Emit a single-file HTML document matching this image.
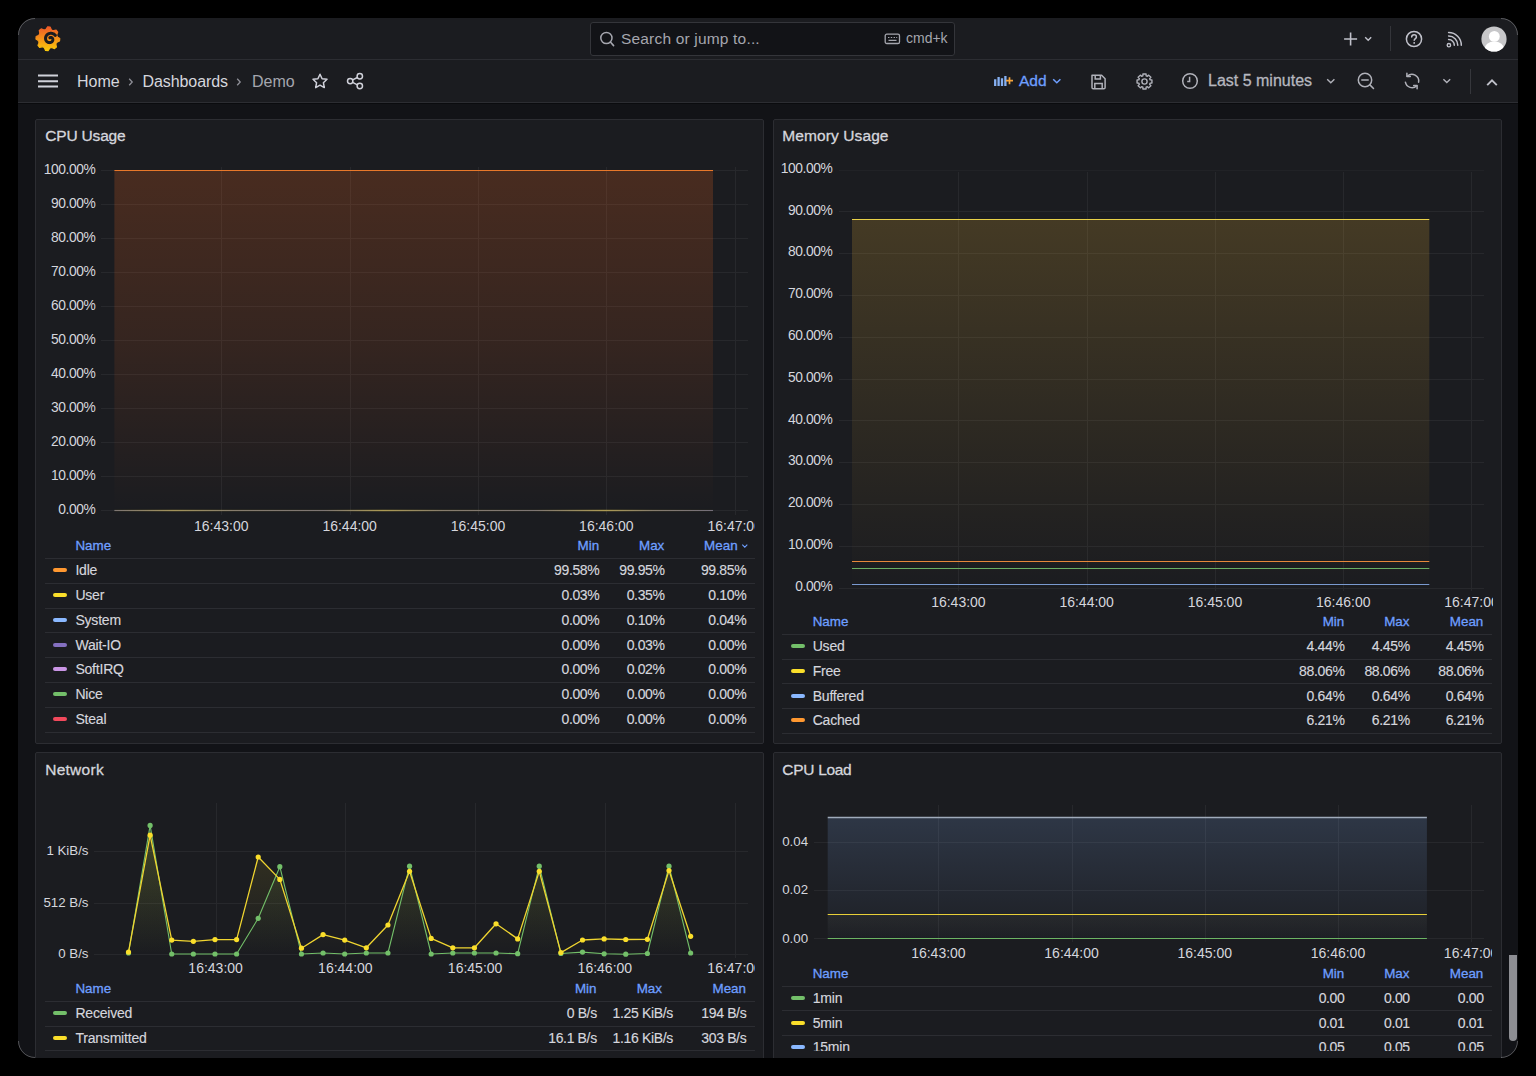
<!DOCTYPE html><html><head><meta charset="utf-8"><style>
*{box-sizing:border-box;margin:0;padding:0}
html,body{width:1536px;height:1076px;overflow:hidden;background:#000}
body{font-family:"Liberation Sans",sans-serif;color:#d5d6dd;position:relative}
#win{position:absolute;left:18px;top:18px;width:1500px;height:1040px;border-radius:17px;overflow:hidden;background:#121317}
#in{position:absolute;left:-18px;top:-18px;width:1536px;height:1076px}
.a{position:absolute;white-space:nowrap}
.hdr{position:absolute;left:0;width:1536px;background:#1b1c20}
.panel{position:absolute;background:#1b1c20;border:1px solid #2c2d32;border-radius:2px}
.med{-webkit-text-stroke:0.3px currentColor}
.thk{-webkit-text-stroke:0.15px currentColor}
.sep{position:absolute;height:1px;background:#2c2d32}
.mk{position:absolute;width:14px;height:4px;border-radius:2px}
svg{position:absolute;overflow:visible}
</style></head><body><div id="win"><div id="in"><div class="hdr" style="top:18px;height:41px"></div><div class="hdr" style="top:59px;height:1px;background:#2c2d32"></div><div class="hdr" style="top:60px;height:42px"></div><div class="hdr" style="top:102px;height:1px;background:#2c2d32"></div><div class="hdr" style="top:103px;height:1px;background:#0a0b0e"></div><svg style="left:35px;top:26px" width="26" height="26" viewBox="0 0 26 26">
<defs><linearGradient id="lg" x1="0" y1="0" x2="0" y2="1"><stop offset="0" stop-color="#f05a28"/><stop offset="1" stop-color="#fbca0a"/></linearGradient></defs>
<polygon fill="url(#lg)" stroke="url(#lg)" stroke-width="1.2" stroke-linejoin="round" points="11.29,2.87 12.64,0.85 15.12,1.07 16.11,3.29 17.14,4.50 18.73,4.66 21.12,4.19 22.72,6.10 21.84,8.37 21.72,9.95 22.73,11.19 24.75,12.54 24.53,15.02 22.31,16.01 21.10,17.04 20.94,18.63 21.41,21.02 19.50,22.62 17.23,21.74 15.65,21.62 14.41,22.63 13.06,24.65 10.58,24.43 9.59,22.21 8.56,21.00 6.97,20.84 4.58,21.31 2.98,19.40 3.86,17.13 3.98,15.55 2.97,14.31 0.95,12.96 1.17,10.48 3.39,9.49 4.60,8.46 4.76,6.87 4.29,4.48 6.20,2.88 8.47,3.76 10.05,3.88"/>
<polyline fill="none" stroke="#1b1c20" stroke-width="3.0" stroke-linecap="round" points="20.36,9.39 20.09,9.10 19.81,8.83 19.51,8.58 19.20,8.35 18.87,8.14 18.54,7.95 18.20,7.79 17.85,7.65 17.49,7.54 17.13,7.44 16.77,7.37 16.41,7.33 16.04,7.30 15.68,7.30 15.32,7.33 14.97,7.37 14.62,7.44 14.28,7.53 13.95,7.63 13.63,7.76 13.32,7.91 13.02,8.08 12.74,8.26 12.47,8.46 12.22,8.67 11.98,8.90 11.75,9.14 11.55,9.39 11.36,9.65 11.19,9.93 11.04,10.21 10.91,10.49 10.80,10.78 10.71,11.08 10.64,11.38 10.59,11.68 10.55,11.98 10.54,12.28 10.54,12.57 10.57,12.87 10.61,13.15 10.67,13.44 10.75,13.71 10.84,13.98 10.95,14.24 11.08,14.49 11.22,14.73 11.37,14.95 11.53,15.17 11.71,15.37 11.90,15.56 12.10,15.73 12.30,15.89 12.52,16.03 12.74,16.16 12.96,16.28 13.19,16.37 13.43,16.45 13.66,16.52 13.90,16.57 14.14,16.61 14.37,16.62 14.61,16.63 14.84,16.62 15.07,16.59 15.29,16.55 15.51,16.49 15.72,16.43 15.93,16.35 16.12,16.25 16.31,16.15 16.49,16.04 16.66,15.91 16.82,15.78 16.96,15.64 17.10,15.49 17.22,15.34 17.34,15.18 17.44,15.01 17.53,14.84 17.60,14.67 17.67,14.49 17.72,14.32 17.76,14.14 17.79,13.96 17.80,13.79 17.80,13.61 17.80,13.44 17.78,13.27 17.75,13.11 17.71,12.95 17.66,12.80 17.60,12.65 17.53,12.51 17.46,12.38 17.37,12.25 17.29,12.13 17.19,12.02 17.09,11.92 16.98,11.83 16.87,11.74 16.76,11.67 16.64,11.60 16.52,11.55 16.40,11.50 16.28,11.46 16.16,11.43 16.05,11.41 15.93,11.40 15.81,11.40 15.70,11.40 15.59,11.41 15.48,11.43 15.38,11.46 15.28,11.49 15.18,11.53 15.09,11.58 15.01,11.63 14.93,11.68 14.86,11.74"/>
</svg><div class="a" style="left:590px;top:22px;width:365px;height:34px;border:1px solid #34353a;border-radius:3px;background:#121317"></div><svg style="left:598px;top:30px" width="18" height="18" viewBox="0 0 18 18"><circle cx="8.4" cy="8" r="5.6" fill="none" stroke="#a5a6ae" stroke-width="1.5"/><path d="M12.4 12 L15.6 15.6" stroke="#a5a6ae" stroke-width="1.6" stroke-linecap="round"/></svg><div class="a " style="top:30.88px;font-size:15.5px;line-height:15.5px;color:#a5a6ae;left:621.00px;letter-spacing:0.18px;">Search or jump to...</div><svg style="left:884px;top:33px" width="17" height="12" viewBox="0 0 17 12"><rect x="1.2" y="1.2" width="14.3" height="9.3" rx="1.6" fill="none" stroke="#a5a6ae" stroke-width="1.3"/><path d="M4 4.5h1.4M6.8 4.5h1.4M9.6 4.5h1.4M12.2 4.5h1M4.5 7.4h8" stroke="#a5a6ae" stroke-width="1.2"/></svg><div class="a " style="top:31.05px;font-size:14px;line-height:14px;color:#a5a6ae;left:906.00px;">cmd+k</div><svg style="left:1340px;top:28px" width="40" height="22" viewBox="0 0 40 22"><path d="M10.6 4.5v13M4.1 11h13" stroke="#c0c1ca" stroke-width="1.6"/><path d="M25.2 9.2l3 3 3-3" fill="none" stroke="#c0c1ca" stroke-width="1.4"/></svg><div class="a" style="left:1390px;top:26px;width:1px;height:25px;background:#34353a"></div><svg style="left:1404px;top:29px" width="20" height="20" viewBox="0 0 20 20"><circle cx="10" cy="10" r="7.6" fill="none" stroke="#c0c1ca" stroke-width="1.5"/><path d="M7.7 8.1c0-1.4 1-2.3 2.4-2.3 1.3 0 2.3.9 2.3 2.1 0 1.6-2.2 1.7-2.2 3.4" fill="none" stroke="#c0c1ca" stroke-width="1.5" stroke-linecap="round"/><circle cx="10.2" cy="13.9" r="0.95" fill="#c0c1ca"/></svg><svg style="left:1445px;top:29px" width="20" height="20" viewBox="0 0 20 20"><circle cx="3.9" cy="16.2" r="1.7" fill="none" stroke="#c0c1ca" stroke-width="1.4"/><path d="M3.6 10.6a5.6 5.6 0 0 1 5.7 5.7M3.6 7.1a9.1 9.1 0 0 1 9.2 9.2M3.6 3.6a12.6 12.6 0 0 1 12.7 12.7" fill="none" stroke="#c0c1ca" stroke-width="1.5" stroke-linecap="round"/></svg><svg style="left:1481px;top:26px" width="26" height="26" viewBox="0 0 26 26"><defs><clipPath id="av"><circle cx="13" cy="13" r="12.6"/></clipPath></defs><circle cx="13" cy="13" r="12.6" fill="#c7c7c9"/><g clip-path="url(#av)" fill="#ffffff"><circle cx="13.3" cy="10.4" r="5.4"/><ellipse cx="13.3" cy="23.6" rx="10" ry="8.2"/></g></svg><svg style="left:37px;top:73px" width="22" height="16" viewBox="0 0 22 16"><path d="M1 2.6h20M1 8.2h20M1 13.6h20" stroke="#d0d1da" stroke-width="2"/></svg><div class="a " style="top:73.66px;font-size:16px;line-height:16px;color:#d5d6dd;left:77.00px;">Home</div><svg style="left:126px;top:76px" width="10" height="12" viewBox="0 0 10 12"><path d="M3.2 2.8l3 3.2-3 3.2" fill="none" stroke="#8e8f97" stroke-width="1.3"/></svg><div class="a " style="top:73.66px;font-size:16px;line-height:16px;color:#d5d6dd;left:142.50px;letter-spacing:-0.08px;">Dashboards</div><svg style="left:234px;top:76px" width="10" height="12" viewBox="0 0 10 12"><path d="M3.2 2.8l3 3.2-3 3.2" fill="none" stroke="#8e8f97" stroke-width="1.3"/></svg><div class="a " style="top:73.66px;font-size:16px;line-height:16px;color:#a5a6ae;left:252.00px;">Demo</div><svg style="left:310px;top:71px" width="20" height="20" viewBox="0 0 20 20"><path d="M10 3.2l2.1 4.5 4.9.6-3.6 3.4.9 4.9L10 14.2l-4.3 2.4.9-4.9L3 8.3l4.9-.6z" fill="none" stroke="#d0d1da" stroke-width="1.5" stroke-linejoin="round"/></svg><svg style="left:345px;top:71px" width="20" height="20" viewBox="0 0 20 20"><circle cx="14.8" cy="5.3" r="2.7" fill="none" stroke="#d0d1da" stroke-width="1.5"/><circle cx="5.2" cy="10.1" r="2.7" fill="none" stroke="#d0d1da" stroke-width="1.5"/><circle cx="14.8" cy="15" r="2.7" fill="none" stroke="#d0d1da" stroke-width="1.5"/><path d="M7.6 8.9l4.8-2.4M7.6 11.3l4.8 2.5" stroke="#d0d1da" stroke-width="1.5"/></svg><svg style="left:992px;top:73px" width="24" height="16" viewBox="0 0 24 16"><path d="M3.2 6.3V13M6.6 4V13M10 5.2V13M13.4 3V13" stroke="#86b0f2" stroke-width="2.3"/><path d="M17.5 4.2v7M14 7.7h7" stroke="#f3a33c" stroke-width="1.7"/></svg><div class="a " style="top:73.38px;font-size:15.5px;line-height:15.5px;color:#6e9fff;left:1019.00px;-webkit-text-stroke:0.3px #6e9fff;">Add</div><svg style="left:1051px;top:76px" width="12" height="10" viewBox="0 0 12 10"><path d="M2.2 3.2l3.6 3.6 3.6-3.6" fill="none" stroke="#6e9fff" stroke-width="1.5"/></svg><svg style="left:1089px;top:72px" width="19" height="19" viewBox="0 0 19 19"><path d="M3 3.2h9.6l3.5 3.5v8.8a1.3 1.3 0 0 1-1.3 1.3H4.3A1.3 1.3 0 0 1 3 15.5z" fill="none" stroke="#b0b1b9" stroke-width="1.5" stroke-linejoin="round"/><path d="M6.2 3.4v3.6h5.2V3.4M5.8 16.6v-5.2h7.4v5.2" fill="none" stroke="#b0b1b9" stroke-width="1.5"/></svg><svg style="left:1135px;top:71.5px" width="19" height="19" viewBox="0 0 19 19"><polygon points="7.92,2.07 11.08,2.07 11.13,3.83 12.36,4.34 13.64,3.13 15.87,5.36 14.66,6.64 15.17,7.87 16.93,7.92 16.93,11.08 15.17,11.13 14.66,12.36 15.87,13.64 13.64,15.87 12.36,14.66 11.13,15.17 11.08,16.93 7.92,16.93 7.87,15.17 6.64,14.66 5.36,15.87 3.13,13.64 4.34,12.36 3.83,11.13 2.07,11.08 2.07,7.92 3.83,7.87 4.34,6.64 3.13,5.36 5.36,3.13 6.64,4.34 7.87,3.83" fill="none" stroke="#b0b1b9" stroke-width="1.4" stroke-linejoin="round"/><circle cx="9.5" cy="9.5" r="2.6" fill="none" stroke="#b0b1b9" stroke-width="1.4"/></svg><svg style="left:1181px;top:72px" width="18" height="18" viewBox="0 0 18 18"><circle cx="9" cy="9" r="7.3" fill="none" stroke="#b0b1b9" stroke-width="1.5"/><path d="M8.6 4.8v4.6h-2.4" fill="none" stroke="#b0b1b9" stroke-width="1.5"/></svg><div class="a " style="top:73.46px;font-size:16px;line-height:16px;color:#b6b7bf;left:1208.00px;-webkit-text-stroke:0.3px #b6b7bf;">Last 5 minutes</div><svg style="left:1325px;top:76px" width="12" height="10" viewBox="0 0 12 10"><path d="M2.2 3.2l3.6 3.6 3.6-3.6" fill="none" stroke="#b0b1b9" stroke-width="1.4"/></svg><svg style="left:1356px;top:71px" width="20" height="20" viewBox="0 0 20 20"><circle cx="9" cy="9" r="6.7" fill="none" stroke="#b0b1b9" stroke-width="1.5"/><path d="M5.8 9h6.4M13.9 13.9l3.6 3.6" stroke="#b0b1b9" stroke-width="1.5" stroke-linecap="round"/></svg><svg style="left:1402px;top:71px" width="20" height="20" viewBox="0 0 20 20"><path d="M5.3 5.3A6.7 6.7 0 0 1 16.6 11.2M3.4 11.2A6.7 6.7 0 0 0 14.7 14.7" fill="none" stroke="#b0b1b9" stroke-width="1.5" stroke-linecap="round"/><path d="M4.9 2.2v3.4h3.4M15.1 17.8v-3.4h-3.4" fill="none" stroke="#b0b1b9" stroke-width="1.5" stroke-linecap="round" stroke-linejoin="round"/></svg><svg style="left:1441px;top:76px" width="12" height="10" viewBox="0 0 12 10"><path d="M2.4 3.2l3.4 3.4 3.4-3.4" fill="none" stroke="#b0b1b9" stroke-width="1.4"/></svg><div class="a" style="left:1469.5px;top:69px;width:1.5px;height:25px;background:#36373c"></div><svg style="left:1485px;top:75px" width="14" height="14" viewBox="0 0 14 14"><path d="M2.2 10.2L7 5.4l4.8 4.8" fill="none" stroke="#c0c1ca" stroke-width="1.9"/></svg><div class="panel" style="left:35px;top:119px;width:729px;height:625px"></div><div class="panel" style="left:773px;top:119px;width:729px;height:625px"></div><div class="panel" style="left:35px;top:752px;width:729px;height:400px"></div><div class="panel" style="left:773px;top:752px;width:729px;height:400px"></div><div class="a med" style="top:127.98px;font-size:15.5px;line-height:15.5px;color:#d5d6dd;left:45.20px;letter-spacing:-0.17px;">CPU Usage</div><div class="a med" style="top:127.98px;font-size:15.5px;line-height:15.5px;color:#d5d6dd;left:782.30px;letter-spacing:0.1px;">Memory Usage</div><div class="a med" style="top:762.48px;font-size:15.5px;line-height:15.5px;color:#d5d6dd;left:45.20px;letter-spacing:0.27px;">Network</div><div class="a med" style="top:762.48px;font-size:15.5px;line-height:15.5px;color:#d5d6dd;left:782.30px;letter-spacing:-0.3px;">CPU Load</div><div class="a " style="top:503.32px;font-size:13.8px;line-height:13.8px;color:#d5d6dd;right:1440.60px;text-align:right;letter-spacing:-0.4px;">0.00%</div><div class="a " style="top:469.29px;font-size:13.8px;line-height:13.8px;color:#d5d6dd;right:1440.60px;text-align:right;letter-spacing:-0.4px;">10.00%</div><div class="a " style="top:435.26px;font-size:13.8px;line-height:13.8px;color:#d5d6dd;right:1440.60px;text-align:right;letter-spacing:-0.4px;">20.00%</div><div class="a " style="top:401.23px;font-size:13.8px;line-height:13.8px;color:#d5d6dd;right:1440.60px;text-align:right;letter-spacing:-0.4px;">30.00%</div><div class="a " style="top:367.20px;font-size:13.8px;line-height:13.8px;color:#d5d6dd;right:1440.60px;text-align:right;letter-spacing:-0.4px;">40.00%</div><div class="a " style="top:333.17px;font-size:13.8px;line-height:13.8px;color:#d5d6dd;right:1440.60px;text-align:right;letter-spacing:-0.4px;">50.00%</div><div class="a " style="top:299.14px;font-size:13.8px;line-height:13.8px;color:#d5d6dd;right:1440.60px;text-align:right;letter-spacing:-0.4px;">60.00%</div><div class="a " style="top:265.11px;font-size:13.8px;line-height:13.8px;color:#d5d6dd;right:1440.60px;text-align:right;letter-spacing:-0.4px;">70.00%</div><div class="a " style="top:231.08px;font-size:13.8px;line-height:13.8px;color:#d5d6dd;right:1440.60px;text-align:right;letter-spacing:-0.4px;">80.00%</div><div class="a " style="top:197.05px;font-size:13.8px;line-height:13.8px;color:#d5d6dd;right:1440.60px;text-align:right;letter-spacing:-0.4px;">90.00%</div><div class="a " style="top:163.02px;font-size:13.8px;line-height:13.8px;color:#d5d6dd;right:1440.60px;text-align:right;letter-spacing:-0.4px;">100.00%</div><div style="position:absolute;left:0;top:0;width:755px;height:1076px;overflow:hidden"><div class="a " style="top:519.15px;font-size:14px;line-height:14px;color:#d5d6dd;left:71.30px;width:300px;text-align:center;">16:43:00</div><div class="a " style="top:519.15px;font-size:14px;line-height:14px;color:#d5d6dd;left:199.65px;width:300px;text-align:center;">16:44:00</div><div class="a " style="top:519.15px;font-size:14px;line-height:14px;color:#d5d6dd;left:328.00px;width:300px;text-align:center;">16:45:00</div><div class="a " style="top:519.15px;font-size:14px;line-height:14px;color:#d5d6dd;left:456.35px;width:300px;text-align:center;">16:46:00</div><div class="a " style="top:519.15px;font-size:14px;line-height:14px;color:#d5d6dd;left:584.70px;width:300px;text-align:center;">16:47:00</div></div><div class="a " style="top:579.72px;font-size:13.8px;line-height:13.8px;color:#d5d6dd;right:703.60px;text-align:right;letter-spacing:-0.4px;">0.00%</div><div class="a " style="top:537.92px;font-size:13.8px;line-height:13.8px;color:#d5d6dd;right:703.60px;text-align:right;letter-spacing:-0.4px;">10.00%</div><div class="a " style="top:496.12px;font-size:13.8px;line-height:13.8px;color:#d5d6dd;right:703.60px;text-align:right;letter-spacing:-0.4px;">20.00%</div><div class="a " style="top:454.32px;font-size:13.8px;line-height:13.8px;color:#d5d6dd;right:703.60px;text-align:right;letter-spacing:-0.4px;">30.00%</div><div class="a " style="top:412.52px;font-size:13.8px;line-height:13.8px;color:#d5d6dd;right:703.60px;text-align:right;letter-spacing:-0.4px;">40.00%</div><div class="a " style="top:370.72px;font-size:13.8px;line-height:13.8px;color:#d5d6dd;right:703.60px;text-align:right;letter-spacing:-0.4px;">50.00%</div><div class="a " style="top:328.92px;font-size:13.8px;line-height:13.8px;color:#d5d6dd;right:703.60px;text-align:right;letter-spacing:-0.4px;">60.00%</div><div class="a " style="top:287.12px;font-size:13.8px;line-height:13.8px;color:#d5d6dd;right:703.60px;text-align:right;letter-spacing:-0.4px;">70.00%</div><div class="a " style="top:245.32px;font-size:13.8px;line-height:13.8px;color:#d5d6dd;right:703.60px;text-align:right;letter-spacing:-0.4px;">80.00%</div><div class="a " style="top:203.52px;font-size:13.8px;line-height:13.8px;color:#d5d6dd;right:703.60px;text-align:right;letter-spacing:-0.4px;">90.00%</div><div class="a " style="top:161.72px;font-size:13.8px;line-height:13.8px;color:#d5d6dd;right:703.60px;text-align:right;letter-spacing:-0.4px;">100.00%</div><div style="position:absolute;left:0;top:0;width:1492.6px;height:1076px;overflow:hidden"><div class="a " style="top:594.95px;font-size:14px;line-height:14px;color:#d5d6dd;left:808.40px;width:300px;text-align:center;">16:43:00</div><div class="a " style="top:594.95px;font-size:14px;line-height:14px;color:#d5d6dd;left:936.67px;width:300px;text-align:center;">16:44:00</div><div class="a " style="top:594.95px;font-size:14px;line-height:14px;color:#d5d6dd;left:1064.94px;width:300px;text-align:center;">16:45:00</div><div class="a " style="top:594.95px;font-size:14px;line-height:14px;color:#d5d6dd;left:1193.21px;width:300px;text-align:center;">16:46:00</div><div class="a " style="top:594.95px;font-size:14px;line-height:14px;color:#d5d6dd;left:1321.48px;width:300px;text-align:center;">16:47:00</div></div><div class="a " style="top:947.24px;font-size:13.3px;line-height:13.3px;color:#d5d6dd;right:1447.50px;text-align:right;">0 B/s</div><div class="a " style="top:895.74px;font-size:13.3px;line-height:13.3px;color:#d5d6dd;right:1447.50px;text-align:right;">512 B/s</div><div class="a " style="top:844.24px;font-size:13.3px;line-height:13.3px;color:#d5d6dd;right:1447.50px;text-align:right;">1 KiB/s</div><div style="position:absolute;left:0;top:0;width:755px;height:1076px;overflow:hidden"><div class="a " style="top:961.45px;font-size:14px;line-height:14px;color:#d5d6dd;left:65.60px;width:300px;text-align:center;">16:43:00</div><div class="a " style="top:961.45px;font-size:14px;line-height:14px;color:#d5d6dd;left:195.35px;width:300px;text-align:center;">16:44:00</div><div class="a " style="top:961.45px;font-size:14px;line-height:14px;color:#d5d6dd;left:325.10px;width:300px;text-align:center;">16:45:00</div><div class="a " style="top:961.45px;font-size:14px;line-height:14px;color:#d5d6dd;left:454.85px;width:300px;text-align:center;">16:46:00</div><div class="a " style="top:961.45px;font-size:14px;line-height:14px;color:#d5d6dd;left:584.60px;width:300px;text-align:center;">16:47:00</div></div><div class="a " style="top:931.54px;font-size:13.3px;line-height:13.3px;color:#d5d6dd;left:782.20px;">0.00</div><div class="a " style="top:883.39px;font-size:13.3px;line-height:13.3px;color:#d5d6dd;left:782.20px;">0.02</div><div class="a " style="top:835.24px;font-size:13.3px;line-height:13.3px;color:#d5d6dd;left:782.20px;">0.04</div><div style="position:absolute;left:0;top:0;width:1492px;height:1076px;overflow:hidden"><div class="a " style="top:945.65px;font-size:14px;line-height:14px;color:#d5d6dd;left:788.40px;width:300px;text-align:center;">16:43:00</div><div class="a " style="top:945.65px;font-size:14px;line-height:14px;color:#d5d6dd;left:921.58px;width:300px;text-align:center;">16:44:00</div><div class="a " style="top:945.65px;font-size:14px;line-height:14px;color:#d5d6dd;left:1054.76px;width:300px;text-align:center;">16:45:00</div><div class="a " style="top:945.65px;font-size:14px;line-height:14px;color:#d5d6dd;left:1187.94px;width:300px;text-align:center;">16:46:00</div><div class="a " style="top:945.65px;font-size:14px;line-height:14px;color:#d5d6dd;left:1321.12px;width:300px;text-align:center;">16:47:00</div></div><svg style="left:0;top:0" width="1536" height="1076" viewBox="0 0 1536 1076"><path d="M101 510.5H748" stroke="#27282c" stroke-width="1"/><path d="M101 476.5H748" stroke="#27282c" stroke-width="1"/><path d="M101 442.5H748" stroke="#27282c" stroke-width="1"/><path d="M101 408.5H748" stroke="#27282c" stroke-width="1"/><path d="M101 374.5H748" stroke="#27282c" stroke-width="1"/><path d="M101 340.5H748" stroke="#27282c" stroke-width="1"/><path d="M101 306.5H748" stroke="#27282c" stroke-width="1"/><path d="M101 272.5H748" stroke="#27282c" stroke-width="1"/><path d="M101 238.5H748" stroke="#27282c" stroke-width="1"/><path d="M101 204.5H748" stroke="#27282c" stroke-width="1"/><path d="M101 170.5H748" stroke="#27282c" stroke-width="1"/><path d="M221.5 167V515" stroke="#27282c" stroke-width="1"/><path d="M350.5 167V515" stroke="#27282c" stroke-width="1"/><path d="M478.5 167V515" stroke="#27282c" stroke-width="1"/><path d="M606.5 167V515" stroke="#27282c" stroke-width="1"/><path d="M735.5 167V515" stroke="#27282c" stroke-width="1"/><linearGradient id="cpuf" gradientUnits="userSpaceOnUse" x1="0" y1="170.71044999999998" x2="0" y2="510.5"><stop offset="0" stop-color="#ff6a1e" stop-opacity="0.2"/><stop offset="0.5" stop-color="#ff6a1e" stop-opacity="0.115"/><stop offset="0.8" stop-color="#ff6a1e" stop-opacity="0.045"/><stop offset="1" stop-color="#ff6a1e" stop-opacity="0"/></linearGradient><rect x="114.4" y="170.71044999999998" width="598.6" height="339.78955" fill="url(#cpuf)"/><polyline points="114.40,170.50 713.00,170.50" fill="none" stroke="#e8782a" stroke-width="1.2" stroke-linejoin="round"/><polyline points="114.40,510.50 713.00,510.50" fill="none" stroke="#6a6680" stroke-width="1.2" stroke-linejoin="round"/><linearGradient id="zl" gradientUnits="userSpaceOnUse" x1="114.4" y1="0" x2="713" y2="0"><stop offset="0" stop-color="#c8b040" stop-opacity="0.2"/><stop offset="0.1" stop-color="#c8b040" stop-opacity="0.6"/><stop offset="0.2" stop-color="#c8b040" stop-opacity="0.3"/><stop offset="0.35" stop-color="#c8b040" stop-opacity="0.2"/><stop offset="0.45" stop-color="#c8b040" stop-opacity="0.7"/><stop offset="0.55" stop-color="#c8b040" stop-opacity="0.3"/><stop offset="0.7" stop-color="#c8b040" stop-opacity="0.2"/><stop offset="0.82" stop-color="#c8b040" stop-opacity="0.7"/><stop offset="0.9" stop-color="#c8b040" stop-opacity="0.3"/><stop offset="1" stop-color="#c8b040" stop-opacity="0.1"/></linearGradient><path d="M114.4 510.5H713" stroke="url(#zl)" stroke-width="1.3"/><path d="M839 588.5H1484" stroke="#27282c" stroke-width="1"/><path d="M839 546.5H1484" stroke="#27282c" stroke-width="1"/><path d="M839 504.5H1484" stroke="#27282c" stroke-width="1"/><path d="M839 462.5H1484" stroke="#27282c" stroke-width="1"/><path d="M839 420.5H1484" stroke="#27282c" stroke-width="1"/><path d="M839 379.5H1484" stroke="#27282c" stroke-width="1"/><path d="M839 337.5H1484" stroke="#27282c" stroke-width="1"/><path d="M839 295.5H1484" stroke="#27282c" stroke-width="1"/><path d="M839 253.5H1484" stroke="#27282c" stroke-width="1"/><path d="M839 211.5H1484" stroke="#27282c" stroke-width="1"/><path d="M839 170.5H1484" stroke="#212226" stroke-width="1"/><path d="M958.5 172V591" stroke="#27282c" stroke-width="1"/><path d="M1087.5 172V591" stroke="#27282c" stroke-width="1"/><path d="M1215.5 172V591" stroke="#27282c" stroke-width="1"/><path d="M1343.5 172V591" stroke="#27282c" stroke-width="1"/><path d="M1471.5 172V591" stroke="#27282c" stroke-width="1"/><linearGradient id="g1" gradientUnits="userSpaceOnUse" x1="0" y1="219.50920000000002" x2="0" y2="587.6"><stop offset="0" stop-color="#fabe37" stop-opacity="0.185"/><stop offset="1" stop-color="#fabe37" stop-opacity="0.0"/></linearGradient><polygon points="852.00,219.51 1429.30,219.51 1429.30,587.60 852.00,587.60" fill="url(#g1)"/><polyline points="852.00,219.50 1429.30,219.50" fill="none" stroke="#e8d048" stroke-width="1.1" stroke-linejoin="round"/><polyline points="852.00,561.50 1429.30,561.50" fill="none" stroke="#e8883a" stroke-width="1.0" stroke-linejoin="round"/><polyline points="852.00,568.50 1429.30,568.50" fill="none" stroke="#6aae62" stroke-width="1.0" stroke-linejoin="round"/><polyline points="852.00,584.50 1429.30,584.50" fill="none" stroke="#7a9ad0" stroke-width="1.0" stroke-linejoin="round"/><path d="M94 954.5H748" stroke="#27282c" stroke-width="1"/><path d="M94 903.5H748" stroke="#27282c" stroke-width="1"/><path d="M94 851.5H748" stroke="#27282c" stroke-width="1"/><path d="M216.5 803V958" stroke="#27282c" stroke-width="1"/><path d="M345.5 803V958" stroke="#27282c" stroke-width="1"/><path d="M475.5 803V958" stroke="#27282c" stroke-width="1"/><path d="M605.5 803V958" stroke="#27282c" stroke-width="1"/><path d="M735.5 803V958" stroke="#27282c" stroke-width="1"/><linearGradient id="g2" gradientUnits="userSpaceOnUse" x1="0" y1="825" x2="0" y2="954.2"><stop offset="0" stop-color="#73bf69" stop-opacity="0.12"/><stop offset="1" stop-color="#73bf69" stop-opacity="0.0"/></linearGradient><polygon points="128.50,954.20 128.50,953.00 150.12,825.40 171.74,954.00 193.36,954.00 214.98,954.00 236.60,954.00 258.22,918.30 279.84,866.70 301.46,954.00 323.08,953.00 344.70,954.00 366.32,953.00 387.94,953.00 409.56,866.20 431.18,954.00 452.80,953.00 474.42,953.00 496.04,953.00 517.66,953.70 539.28,866.20 560.90,953.50 582.52,952.10 604.14,953.80 625.76,954.20 647.38,953.50 669.00,866.20 690.62,953.00 690.62,954.20" fill="url(#g2)"/><linearGradient id="g3" gradientUnits="userSpaceOnUse" x1="0" y1="835" x2="0" y2="954.2"><stop offset="0" stop-color="#fade2a" stop-opacity="0.12"/><stop offset="1" stop-color="#fade2a" stop-opacity="0.0"/></linearGradient><polygon points="128.50,954.20 128.50,952.10 150.12,835.20 171.74,940.10 193.36,941.30 214.98,939.60 236.60,939.60 258.22,857.00 279.84,879.40 301.46,948.20 323.08,934.60 344.70,940.10 366.32,947.80 387.94,925.00 409.56,871.30 431.18,938.40 452.80,947.80 474.42,947.80 496.04,923.80 517.66,938.90 539.28,871.30 560.90,952.60 582.52,940.00 604.14,938.90 625.76,939.50 647.38,939.30 669.00,870.50 690.62,936.30 690.62,954.20" fill="url(#g3)"/><polyline points="128.50,953.00 150.12,825.40 171.74,954.00 193.36,954.00 214.98,954.00 236.60,954.00 258.22,918.30 279.84,866.70 301.46,954.00 323.08,953.00 344.70,954.00 366.32,953.00 387.94,953.00 409.56,866.20 431.18,954.00 452.80,953.00 474.42,953.00 496.04,953.00 517.66,953.70 539.28,866.20 560.90,953.50 582.52,952.10 604.14,953.80 625.76,954.20 647.38,953.50 669.00,866.20 690.62,953.00" fill="none" stroke="#73bf69" stroke-width="1.1" stroke-linejoin="round"/><polyline points="128.50,952.10 150.12,835.20 171.74,940.10 193.36,941.30 214.98,939.60 236.60,939.60 258.22,857.00 279.84,879.40 301.46,948.20 323.08,934.60 344.70,940.10 366.32,947.80 387.94,925.00 409.56,871.30 431.18,938.40 452.80,947.80 474.42,947.80 496.04,923.80 517.66,938.90 539.28,871.30 560.90,952.60 582.52,940.00 604.14,938.90 625.76,939.50 647.38,939.30 669.00,870.50 690.62,936.30" fill="none" stroke="#f0d530" stroke-width="1.3" stroke-linejoin="round"/><circle cx="128.50" cy="953.00" r="2.6" fill="#73bf69"/><circle cx="150.12" cy="825.40" r="2.6" fill="#73bf69"/><circle cx="171.74" cy="954.00" r="2.6" fill="#73bf69"/><circle cx="193.36" cy="954.00" r="2.6" fill="#73bf69"/><circle cx="214.98" cy="954.00" r="2.6" fill="#73bf69"/><circle cx="236.60" cy="954.00" r="2.6" fill="#73bf69"/><circle cx="258.22" cy="918.30" r="2.6" fill="#73bf69"/><circle cx="279.84" cy="866.70" r="2.6" fill="#73bf69"/><circle cx="301.46" cy="954.00" r="2.6" fill="#73bf69"/><circle cx="323.08" cy="953.00" r="2.6" fill="#73bf69"/><circle cx="344.70" cy="954.00" r="2.6" fill="#73bf69"/><circle cx="366.32" cy="953.00" r="2.6" fill="#73bf69"/><circle cx="387.94" cy="953.00" r="2.6" fill="#73bf69"/><circle cx="409.56" cy="866.20" r="2.6" fill="#73bf69"/><circle cx="431.18" cy="954.00" r="2.6" fill="#73bf69"/><circle cx="452.80" cy="953.00" r="2.6" fill="#73bf69"/><circle cx="474.42" cy="953.00" r="2.6" fill="#73bf69"/><circle cx="496.04" cy="953.00" r="2.6" fill="#73bf69"/><circle cx="517.66" cy="953.70" r="2.6" fill="#73bf69"/><circle cx="539.28" cy="866.20" r="2.6" fill="#73bf69"/><circle cx="560.90" cy="953.50" r="2.6" fill="#73bf69"/><circle cx="582.52" cy="952.10" r="2.6" fill="#73bf69"/><circle cx="604.14" cy="953.80" r="2.6" fill="#73bf69"/><circle cx="625.76" cy="954.20" r="2.6" fill="#73bf69"/><circle cx="647.38" cy="953.50" r="2.6" fill="#73bf69"/><circle cx="669.00" cy="866.20" r="2.6" fill="#73bf69"/><circle cx="690.62" cy="953.00" r="2.6" fill="#73bf69"/><circle cx="128.50" cy="952.10" r="2.6" fill="#fade2a"/><circle cx="150.12" cy="835.20" r="2.6" fill="#fade2a"/><circle cx="171.74" cy="940.10" r="2.6" fill="#fade2a"/><circle cx="193.36" cy="941.30" r="2.6" fill="#fade2a"/><circle cx="214.98" cy="939.60" r="2.6" fill="#fade2a"/><circle cx="236.60" cy="939.60" r="2.6" fill="#fade2a"/><circle cx="258.22" cy="857.00" r="2.6" fill="#fade2a"/><circle cx="279.84" cy="879.40" r="2.6" fill="#fade2a"/><circle cx="301.46" cy="948.20" r="2.6" fill="#fade2a"/><circle cx="323.08" cy="934.60" r="2.6" fill="#fade2a"/><circle cx="344.70" cy="940.10" r="2.6" fill="#fade2a"/><circle cx="366.32" cy="947.80" r="2.6" fill="#fade2a"/><circle cx="387.94" cy="925.00" r="2.6" fill="#fade2a"/><circle cx="409.56" cy="871.30" r="2.6" fill="#fade2a"/><circle cx="431.18" cy="938.40" r="2.6" fill="#fade2a"/><circle cx="452.80" cy="947.80" r="2.6" fill="#fade2a"/><circle cx="474.42" cy="947.80" r="2.6" fill="#fade2a"/><circle cx="496.04" cy="923.80" r="2.6" fill="#fade2a"/><circle cx="517.66" cy="938.90" r="2.6" fill="#fade2a"/><circle cx="539.28" cy="871.30" r="2.6" fill="#fade2a"/><circle cx="560.90" cy="952.60" r="2.6" fill="#fade2a"/><circle cx="582.52" cy="940.00" r="2.6" fill="#fade2a"/><circle cx="604.14" cy="938.90" r="2.6" fill="#fade2a"/><circle cx="625.76" cy="939.50" r="2.6" fill="#fade2a"/><circle cx="647.38" cy="939.30" r="2.6" fill="#fade2a"/><circle cx="669.00" cy="870.50" r="2.6" fill="#fade2a"/><circle cx="690.62" cy="936.30" r="2.6" fill="#fade2a"/><path d="M814 938.5H1484" stroke="#27282c" stroke-width="1"/><path d="M814 890.5H1484" stroke="#27282c" stroke-width="1"/><path d="M814 842.5H1484" stroke="#27282c" stroke-width="1"/><path d="M938.5 805V942" stroke="#27282c" stroke-width="1"/><path d="M1072.5 805V942" stroke="#27282c" stroke-width="1"/><path d="M1205.5 805V942" stroke="#27282c" stroke-width="1"/><path d="M1338.5 805V942" stroke="#27282c" stroke-width="1"/><path d="M1471.5 805V942" stroke="#27282c" stroke-width="1"/><linearGradient id="g4" gradientUnits="userSpaceOnUse" x1="0" y1="818.125" x2="0" y2="938.5"><stop offset="0" stop-color="#8ab8ff" stop-opacity="0.17"/><stop offset="1" stop-color="#8ab8ff" stop-opacity="0.02"/></linearGradient><polygon points="827.70,818.12 1426.90,818.12 1426.90,938.50 827.70,938.50" fill="url(#g4)"/><linearGradient id="g5" gradientUnits="userSpaceOnUse" x1="0" y1="914.425" x2="0" y2="938.5"><stop offset="0" stop-color="#b0a050" stop-opacity="0.05"/><stop offset="1" stop-color="#b0a050" stop-opacity="0.0"/></linearGradient><polygon points="827.70,914.42 1426.90,914.42 1426.90,938.50 827.70,938.50" fill="url(#g5)"/><polyline points="827.70,817.50 1426.90,817.50" fill="none" stroke="#a0abbb" stroke-width="1.3" stroke-linejoin="round"/><polyline points="827.70,914.50 1426.90,914.50" fill="none" stroke="#e8cf38" stroke-width="1.1" stroke-linejoin="round"/><polyline points="827.70,938.50 1426.90,938.50" fill="none" stroke="#6cb463" stroke-width="1.1" stroke-linejoin="round"/></svg><div class="a med" style="top:539.26px;font-size:13.4px;line-height:13.4px;color:#6e9fff;left:75.40px;">Name</div><div class="a med" style="top:539.26px;font-size:13.4px;line-height:13.4px;color:#6e9fff;right:936.90px;text-align:right;">Min</div><div class="a med" style="top:539.26px;font-size:13.4px;line-height:13.4px;color:#6e9fff;right:871.70px;text-align:right;">Max</div><div class="a med" style="top:539.26px;font-size:13.4px;line-height:13.4px;color:#6e9fff;right:798.40px;text-align:right;">Mean</div><svg style="left:741.4px;top:542.2px" width="8" height="8" viewBox="0 0 8 8"><path d="M1.3 2.7l2.5 2.5 2.5-2.5" fill="none" stroke="#6e9fff" stroke-width="1.1"/></svg><div class="sep" style="left:45px;width:710px;top:558px"></div><div class="mk" style="left:53px;top:568.2px;background:#ff9830"></div><div class="a thk" style="top:563.25px;font-size:14px;line-height:14px;color:#d5d6dd;left:75.40px;letter-spacing:-0.2px;">Idle</div><div class="a thk" style="top:563.25px;font-size:14px;line-height:14px;color:#d5d6dd;right:936.60px;text-align:right;letter-spacing:-0.35px;">99.58%</div><div class="a thk" style="top:563.25px;font-size:14px;line-height:14px;color:#d5d6dd;right:871.40px;text-align:right;letter-spacing:-0.35px;">99.95%</div><div class="a thk" style="top:563.25px;font-size:14px;line-height:14px;color:#d5d6dd;right:789.70px;text-align:right;letter-spacing:-0.35px;">99.85%</div><div class="sep" style="left:45px;width:710px;top:583px"></div><div class="mk" style="left:53px;top:593.0px;background:#fade2a"></div><div class="a thk" style="top:588.05px;font-size:14px;line-height:14px;color:#d5d6dd;left:75.40px;letter-spacing:-0.2px;">User</div><div class="a thk" style="top:588.05px;font-size:14px;line-height:14px;color:#d5d6dd;right:936.60px;text-align:right;letter-spacing:-0.35px;">0.03%</div><div class="a thk" style="top:588.05px;font-size:14px;line-height:14px;color:#d5d6dd;right:871.40px;text-align:right;letter-spacing:-0.35px;">0.35%</div><div class="a thk" style="top:588.05px;font-size:14px;line-height:14px;color:#d5d6dd;right:789.70px;text-align:right;letter-spacing:-0.35px;">0.10%</div><div class="sep" style="left:45px;width:710px;top:608px"></div><div class="mk" style="left:53px;top:617.8px;background:#8ab8ff"></div><div class="a thk" style="top:612.85px;font-size:14px;line-height:14px;color:#d5d6dd;left:75.40px;letter-spacing:-0.2px;">System</div><div class="a thk" style="top:612.85px;font-size:14px;line-height:14px;color:#d5d6dd;right:936.60px;text-align:right;letter-spacing:-0.35px;">0.00%</div><div class="a thk" style="top:612.85px;font-size:14px;line-height:14px;color:#d5d6dd;right:871.40px;text-align:right;letter-spacing:-0.35px;">0.10%</div><div class="a thk" style="top:612.85px;font-size:14px;line-height:14px;color:#d5d6dd;right:789.70px;text-align:right;letter-spacing:-0.35px;">0.04%</div><div class="sep" style="left:45px;width:710px;top:632px"></div><div class="mk" style="left:53px;top:642.6px;background:#8470c0"></div><div class="a thk" style="top:637.65px;font-size:14px;line-height:14px;color:#d5d6dd;left:75.40px;letter-spacing:-0.2px;">Wait-IO</div><div class="a thk" style="top:637.65px;font-size:14px;line-height:14px;color:#d5d6dd;right:936.60px;text-align:right;letter-spacing:-0.35px;">0.00%</div><div class="a thk" style="top:637.65px;font-size:14px;line-height:14px;color:#d5d6dd;right:871.40px;text-align:right;letter-spacing:-0.35px;">0.03%</div><div class="a thk" style="top:637.65px;font-size:14px;line-height:14px;color:#d5d6dd;right:789.70px;text-align:right;letter-spacing:-0.35px;">0.00%</div><div class="sep" style="left:45px;width:710px;top:657px"></div><div class="mk" style="left:53px;top:667.4px;background:#ca95e5"></div><div class="a thk" style="top:662.45px;font-size:14px;line-height:14px;color:#d5d6dd;left:75.40px;letter-spacing:-0.2px;">SoftIRQ</div><div class="a thk" style="top:662.45px;font-size:14px;line-height:14px;color:#d5d6dd;right:936.60px;text-align:right;letter-spacing:-0.35px;">0.00%</div><div class="a thk" style="top:662.45px;font-size:14px;line-height:14px;color:#d5d6dd;right:871.40px;text-align:right;letter-spacing:-0.35px;">0.02%</div><div class="a thk" style="top:662.45px;font-size:14px;line-height:14px;color:#d5d6dd;right:789.70px;text-align:right;letter-spacing:-0.35px;">0.00%</div><div class="sep" style="left:45px;width:710px;top:682px"></div><div class="mk" style="left:53px;top:692.2px;background:#73bf69"></div><div class="a thk" style="top:687.25px;font-size:14px;line-height:14px;color:#d5d6dd;left:75.40px;letter-spacing:-0.2px;">Nice</div><div class="a thk" style="top:687.25px;font-size:14px;line-height:14px;color:#d5d6dd;right:936.60px;text-align:right;letter-spacing:-0.35px;">0.00%</div><div class="a thk" style="top:687.25px;font-size:14px;line-height:14px;color:#d5d6dd;right:871.40px;text-align:right;letter-spacing:-0.35px;">0.00%</div><div class="a thk" style="top:687.25px;font-size:14px;line-height:14px;color:#d5d6dd;right:789.70px;text-align:right;letter-spacing:-0.35px;">0.00%</div><div class="sep" style="left:45px;width:710px;top:707px"></div><div class="mk" style="left:53px;top:717.0px;background:#f2495c"></div><div class="a thk" style="top:712.05px;font-size:14px;line-height:14px;color:#d5d6dd;left:75.40px;letter-spacing:-0.2px;">Steal</div><div class="a thk" style="top:712.05px;font-size:14px;line-height:14px;color:#d5d6dd;right:936.60px;text-align:right;letter-spacing:-0.35px;">0.00%</div><div class="a thk" style="top:712.05px;font-size:14px;line-height:14px;color:#d5d6dd;right:871.40px;text-align:right;letter-spacing:-0.35px;">0.00%</div><div class="a thk" style="top:712.05px;font-size:14px;line-height:14px;color:#d5d6dd;right:789.70px;text-align:right;letter-spacing:-0.35px;">0.00%</div><div class="sep" style="left:45px;width:710px;top:732px"></div><div class="a med" style="top:615.06px;font-size:13.4px;line-height:13.4px;color:#6e9fff;left:812.70px;">Name</div><div class="a med" style="top:615.06px;font-size:13.4px;line-height:13.4px;color:#6e9fff;right:191.80px;text-align:right;">Min</div><div class="a med" style="top:615.06px;font-size:13.4px;line-height:13.4px;color:#6e9fff;right:126.50px;text-align:right;">Max</div><div class="a med" style="top:615.06px;font-size:13.4px;line-height:13.4px;color:#6e9fff;right:52.70px;text-align:right;">Mean</div><div class="sep" style="left:782px;width:710px;top:634px"></div><div class="mk" style="left:790.7px;top:644.2px;background:#73bf69"></div><div class="a thk" style="top:639.25px;font-size:14px;line-height:14px;color:#d5d6dd;left:812.70px;letter-spacing:-0.2px;">Used</div><div class="a thk" style="top:639.25px;font-size:14px;line-height:14px;color:#d5d6dd;right:191.50px;text-align:right;letter-spacing:-0.35px;">4.44%</div><div class="a thk" style="top:639.25px;font-size:14px;line-height:14px;color:#d5d6dd;right:126.20px;text-align:right;letter-spacing:-0.35px;">4.45%</div><div class="a thk" style="top:639.25px;font-size:14px;line-height:14px;color:#d5d6dd;right:52.40px;text-align:right;letter-spacing:-0.35px;">4.45%</div><div class="sep" style="left:782px;width:710px;top:659px"></div><div class="mk" style="left:790.7px;top:668.9px;background:#fade2a"></div><div class="a thk" style="top:663.95px;font-size:14px;line-height:14px;color:#d5d6dd;left:812.70px;letter-spacing:-0.2px;">Free</div><div class="a thk" style="top:663.95px;font-size:14px;line-height:14px;color:#d5d6dd;right:191.50px;text-align:right;letter-spacing:-0.35px;">88.06%</div><div class="a thk" style="top:663.95px;font-size:14px;line-height:14px;color:#d5d6dd;right:126.20px;text-align:right;letter-spacing:-0.35px;">88.06%</div><div class="a thk" style="top:663.95px;font-size:14px;line-height:14px;color:#d5d6dd;right:52.40px;text-align:right;letter-spacing:-0.35px;">88.06%</div><div class="sep" style="left:782px;width:710px;top:683px"></div><div class="mk" style="left:790.7px;top:693.6px;background:#8ab8ff"></div><div class="a thk" style="top:688.65px;font-size:14px;line-height:14px;color:#d5d6dd;left:812.70px;letter-spacing:-0.2px;">Buffered</div><div class="a thk" style="top:688.65px;font-size:14px;line-height:14px;color:#d5d6dd;right:191.50px;text-align:right;letter-spacing:-0.35px;">0.64%</div><div class="a thk" style="top:688.65px;font-size:14px;line-height:14px;color:#d5d6dd;right:126.20px;text-align:right;letter-spacing:-0.35px;">0.64%</div><div class="a thk" style="top:688.65px;font-size:14px;line-height:14px;color:#d5d6dd;right:52.40px;text-align:right;letter-spacing:-0.35px;">0.64%</div><div class="sep" style="left:782px;width:710px;top:708px"></div><div class="mk" style="left:790.7px;top:718.3px;background:#ff9830"></div><div class="a thk" style="top:713.35px;font-size:14px;line-height:14px;color:#d5d6dd;left:812.70px;letter-spacing:-0.2px;">Cached</div><div class="a thk" style="top:713.35px;font-size:14px;line-height:14px;color:#d5d6dd;right:191.50px;text-align:right;letter-spacing:-0.35px;">6.21%</div><div class="a thk" style="top:713.35px;font-size:14px;line-height:14px;color:#d5d6dd;right:126.20px;text-align:right;letter-spacing:-0.35px;">6.21%</div><div class="a thk" style="top:713.35px;font-size:14px;line-height:14px;color:#d5d6dd;right:52.40px;text-align:right;letter-spacing:-0.35px;">6.21%</div><div class="sep" style="left:782px;width:710px;top:733px"></div><div style="position:absolute;left:0;top:0;width:1536px;height:1051px;overflow:hidden"><div class="a med" style="top:982.16px;font-size:13.4px;line-height:13.4px;color:#6e9fff;left:75.40px;">Name</div><div class="a med" style="top:982.16px;font-size:13.4px;line-height:13.4px;color:#6e9fff;right:939.50px;text-align:right;">Min</div><div class="a med" style="top:982.16px;font-size:13.4px;line-height:13.4px;color:#6e9fff;right:874.00px;text-align:right;">Max</div><div class="a med" style="top:982.16px;font-size:13.4px;line-height:13.4px;color:#6e9fff;right:790.00px;text-align:right;">Mean</div><div class="sep" style="left:45px;width:710px;top:1001px"></div><div class="mk" style="left:53px;top:1011.3px;background:#73bf69"></div><div class="a thk" style="top:1006.35px;font-size:14px;line-height:14px;color:#d5d6dd;left:75.40px;letter-spacing:-0.2px;">Received</div><div class="a thk" style="top:1006.35px;font-size:14px;line-height:14px;color:#d5d6dd;right:939.20px;text-align:right;letter-spacing:-0.35px;">0 B/s</div><div class="a thk" style="top:1006.35px;font-size:14px;line-height:14px;color:#d5d6dd;right:863.10px;text-align:right;letter-spacing:-0.35px;">1.25 KiB/s</div><div class="a thk" style="top:1006.35px;font-size:14px;line-height:14px;color:#d5d6dd;right:789.70px;text-align:right;letter-spacing:-0.35px;">194 B/s</div><div class="sep" style="left:45px;width:710px;top:1026px"></div><div class="mk" style="left:53px;top:1035.9px;background:#fade2a"></div><div class="a thk" style="top:1030.95px;font-size:14px;line-height:14px;color:#d5d6dd;left:75.40px;letter-spacing:-0.2px;">Transmitted</div><div class="a thk" style="top:1030.95px;font-size:14px;line-height:14px;color:#d5d6dd;right:939.20px;text-align:right;letter-spacing:-0.35px;">16.1 B/s</div><div class="a thk" style="top:1030.95px;font-size:14px;line-height:14px;color:#d5d6dd;right:863.10px;text-align:right;letter-spacing:-0.35px;">1.16 KiB/s</div><div class="a thk" style="top:1030.95px;font-size:14px;line-height:14px;color:#d5d6dd;right:789.70px;text-align:right;letter-spacing:-0.35px;">303 B/s</div><div class="sep" style="left:45px;width:710px;top:1050px"></div><div class="a med" style="top:966.96px;font-size:13.4px;line-height:13.4px;color:#6e9fff;left:812.70px;">Name</div><div class="a med" style="top:966.96px;font-size:13.4px;line-height:13.4px;color:#6e9fff;right:191.80px;text-align:right;">Min</div><div class="a med" style="top:966.96px;font-size:13.4px;line-height:13.4px;color:#6e9fff;right:126.50px;text-align:right;">Max</div><div class="a med" style="top:966.96px;font-size:13.4px;line-height:13.4px;color:#6e9fff;right:52.70px;text-align:right;">Mean</div><div class="sep" style="left:782px;width:710px;top:986px"></div><div class="mk" style="left:790.7px;top:995.9px;background:#73bf69"></div><div class="a thk" style="top:990.95px;font-size:14px;line-height:14px;color:#d5d6dd;left:812.70px;letter-spacing:-0.2px;">1min</div><div class="a thk" style="top:990.95px;font-size:14px;line-height:14px;color:#d5d6dd;right:191.50px;text-align:right;letter-spacing:-0.35px;">0.00</div><div class="a thk" style="top:990.95px;font-size:14px;line-height:14px;color:#d5d6dd;right:126.20px;text-align:right;letter-spacing:-0.35px;">0.00</div><div class="a thk" style="top:990.95px;font-size:14px;line-height:14px;color:#d5d6dd;right:52.40px;text-align:right;letter-spacing:-0.35px;">0.00</div><div class="sep" style="left:782px;width:710px;top:1010px"></div><div class="mk" style="left:790.7px;top:1020.5px;background:#fade2a"></div><div class="a thk" style="top:1015.60px;font-size:14px;line-height:14px;color:#d5d6dd;left:812.70px;letter-spacing:-0.2px;">5min</div><div class="a thk" style="top:1015.60px;font-size:14px;line-height:14px;color:#d5d6dd;right:191.50px;text-align:right;letter-spacing:-0.35px;">0.01</div><div class="a thk" style="top:1015.60px;font-size:14px;line-height:14px;color:#d5d6dd;right:126.20px;text-align:right;letter-spacing:-0.35px;">0.01</div><div class="a thk" style="top:1015.60px;font-size:14px;line-height:14px;color:#d5d6dd;right:52.40px;text-align:right;letter-spacing:-0.35px;">0.01</div><div class="sep" style="left:782px;width:710px;top:1035px"></div><div class="mk" style="left:790.7px;top:1045.2px;background:#8ab8ff"></div><div class="a thk" style="top:1040.25px;font-size:14px;line-height:14px;color:#d5d6dd;left:812.70px;letter-spacing:-0.2px;">15min</div><div class="a thk" style="top:1040.25px;font-size:14px;line-height:14px;color:#d5d6dd;right:191.50px;text-align:right;letter-spacing:-0.35px;">0.05</div><div class="a thk" style="top:1040.25px;font-size:14px;line-height:14px;color:#d5d6dd;right:126.20px;text-align:right;letter-spacing:-0.35px;">0.05</div><div class="a thk" style="top:1040.25px;font-size:14px;line-height:14px;color:#d5d6dd;right:52.40px;text-align:right;letter-spacing:-0.35px;">0.05</div><div class="sep" style="left:782px;width:710px;top:1060px"></div></div><div class="a" style="left:1509px;top:955px;width:8px;height:86px;border-radius:0 0 4px 4px;background:#8d8e93"></div></div></div><svg style="left:0;top:0" width="1536" height="1076" viewBox="0 0 1536 1076"><path d="M18.5 35 A16.5 16.5 0 0 1 35 18.5 M1501 18.5 A16.5 16.5 0 0 1 1517.5 35 M1517.5 1041 A16.5 16.5 0 0 1 1501 1057.5 M35 1057.5 A16.5 16.5 0 0 1 18.5 1041" fill="none" stroke="rgba(190,190,195,0.42)" stroke-width="0.9"/></svg></body></html>
